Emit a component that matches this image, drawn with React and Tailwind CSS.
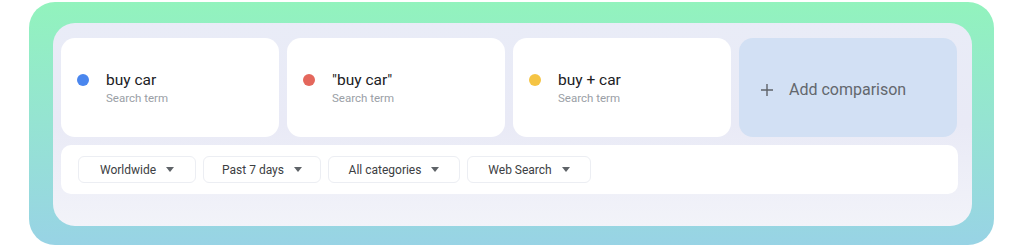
import React from "react";

const TERMS = [
  { label: "buy car", dot: "bg-[#4a86ee]" },
  { label: "\"buy car\"", dot: "bg-[#e4675c]" },
  { label: "buy + car", dot: "bg-[#f5c444]" },
];

const FILTERS = [
  { label: "Worldwide", w: "w-[118px]" },
  { label: "Past 7 days", w: "w-[118px]" },
  { label: "All categories", w: "w-[132px]" },
  { label: "Web Search", w: "w-[124px]" },
];

function Caret() {
  return (
    <svg width="8" height="5" viewBox="0 0 8 5" className="shrink-0">
      <path d="M0 0h8L4 5z" fill="#5f6368" />
    </svg>
  );
}

export default function App() {
  return (
    <div className="w-[1024px] h-[249px] bg-white overflow-hidden" style={{ fontFamily: "Roboto, 'Open Sans', sans-serif" }}>
      <div className="ml-[29px] mt-[2px] w-[965px] h-[243px] rounded-[26px] bg-gradient-to-b from-[#92f3bd] to-[#98d3e5] pl-[24px] pt-[21px]">
        <div className="w-[919px] h-[203px] rounded-[22px] bg-gradient-to-b from-[#e9ecf7] via-[#e9eaf6] to-[#f2f3f9] px-[8px] pt-[15px]">
          {/* term cards */}
          <div className="flex gap-[8px]">
            {TERMS.map((t) => (
              <div key={t.label} className="w-[218px] h-[99px] rounded-[14px] bg-white flex items-center pl-[16px] gap-[17px]">
                <span className={`w-[12px] h-[12px] rounded-full ${t.dot} mb-[16px]`} />
                <div className="flex flex-col">
                  <span className="text-[15.5px] leading-[20px] text-[#202124]">{t.label}</span>
                  <span className="text-[11.5px] leading-[16px] text-[#9aa0a6]">Search term</span>
                </div>
              </div>
            ))}
            <div className="w-[218px] h-[99px] rounded-[14px] bg-[#d2e0f4] flex items-center pl-[22px] pt-[5px] gap-[16px] text-[#63676d]">
              <svg width="12" height="12" viewBox="0 0 12 12">
                <path d="M6 0v12M0 6h12" stroke="#5f6368" strokeWidth="1.4" />
              </svg>
              <span className="text-[16px]">Add comparison</span>
            </div>
          </div>
          {/* filter bar */}
          <div className="mt-[8px] w-[897px] h-[49px] rounded-[10px] bg-white flex items-center pl-[17px] gap-[7px]">
            {FILTERS.map((f) => (
              <div key={f.label} className={`${f.w} h-[27px] rounded-[6px] border border-[#eceef3] flex items-center justify-center gap-[10px] text-[12px] text-[#3c4043]`}>
                <span>{f.label}</span>
                <Caret />
              </div>
            ))}
          </div>
        </div>
      </div>
    </div>
  );
}
